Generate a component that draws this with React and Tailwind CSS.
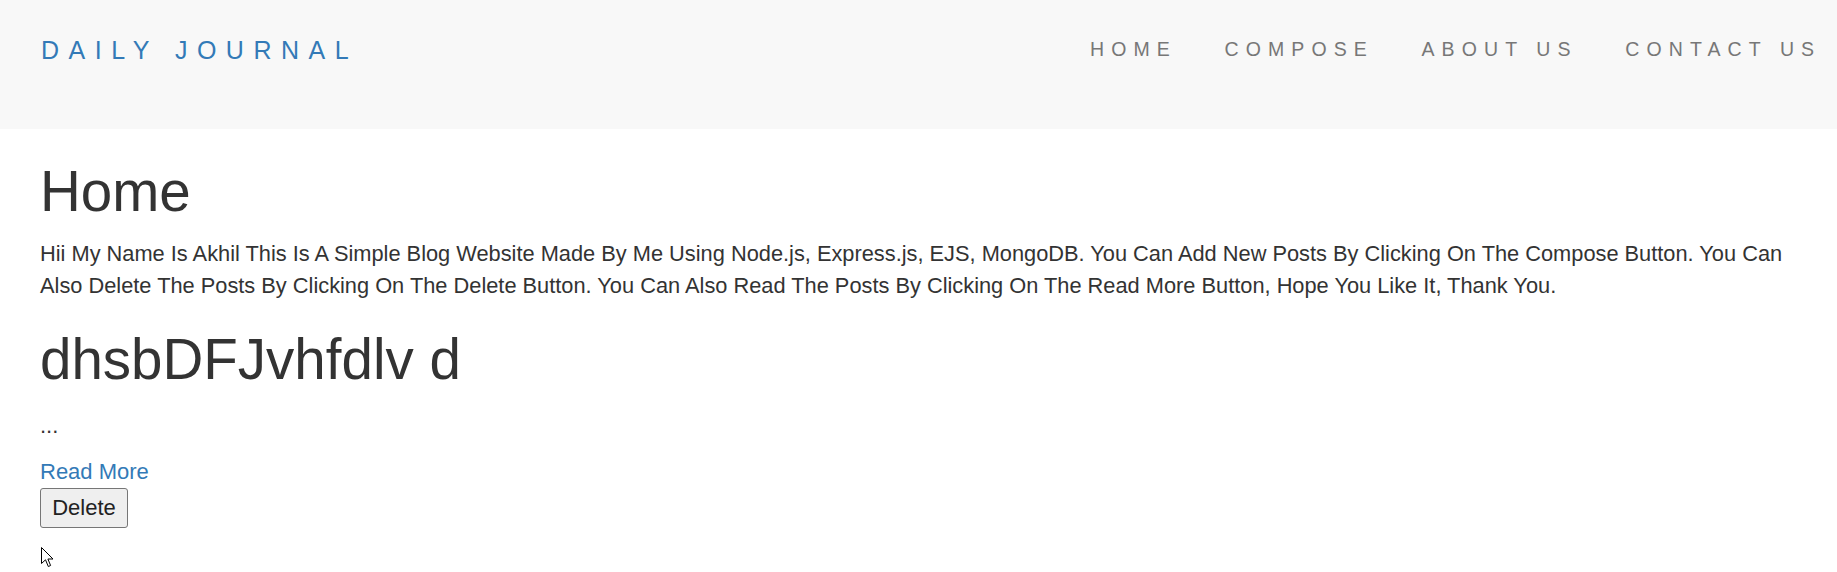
export default function App() {
  const navItems = ["HOME", "COMPOSE", "ABOUT US", "CONTACT US"];
  return (
    <div className="relative min-h-[572px] bg-white font-['Liberation_Sans',Arial,sans-serif] text-[#333]">
      <nav className="flex h-[129px] items-start justify-between bg-[#f8f8f8]">
        <a className="pl-[41px] pt-[38px] text-[25px] leading-[25px] tracking-[9.5px] text-[#337ab7]">
          DAILY JOURNAL
        </a>
        <ul className="mr-[-8px] flex pt-[40px]">
          {navItems.map((item) => (
            <li key={item}>
              <a className="block px-[23.8px] text-[19.5px] leading-[19.5px] tracking-[7.1px] text-[#777]">
                {item}
              </a>
            </li>
          ))}
        </ul>
      </nav>
      <main className="pl-[40px] pr-[36px]">
        <h1 className="mt-[32px] mb-[15px] text-[56.5px] leading-[1.1] font-normal">Home</h1>
        <p className="text-[21.8px] leading-[32px]">
          Hii My Name Is Akhil This Is A Simple Blog Website Made By Me Using Node.js, Express.js, EJS, MongoDB. You Can Add New Posts By Clicking On The Compose Button. You Can Also Delete The Posts By Clicking On The Delete Button. You Can Also Read The Posts By Clicking On The Read More Button, Hope You Like It, Thank You.
        </p>
        <h1 className="mt-[26.5px] mb-[19px] text-[56.5px] leading-[1.1] font-normal">dhsbDFJvhfdlv d</h1>
        <p className="mb-[14.5px] text-[22px] leading-[32px]">...</p>
        <a className="block text-[22px] leading-[32px] text-[#337ab7]">Read More</a>
        <button className="h-[40px] w-[88px] rounded-[3px] border border-[#767676] bg-[#efefef] text-[22px] leading-[30px] text-[#222]">
          Delete
        </button>
      </main>
      <svg
        className="absolute left-[41px] top-[547px]"
        width="13"
        height="21"
        viewBox="0 0 13 21"
      >
        <path
          d="M0.5 0.5 L0.5 16.5 L4.5 12.8 L7.3 19.5 L9.6 18.5 L6.9 12 L12 12 Z"
          fill="#fff"
          stroke="#000"
          strokeWidth="1"
          strokeLinejoin="miter"
        />
      </svg>
    </div>
  );
}
